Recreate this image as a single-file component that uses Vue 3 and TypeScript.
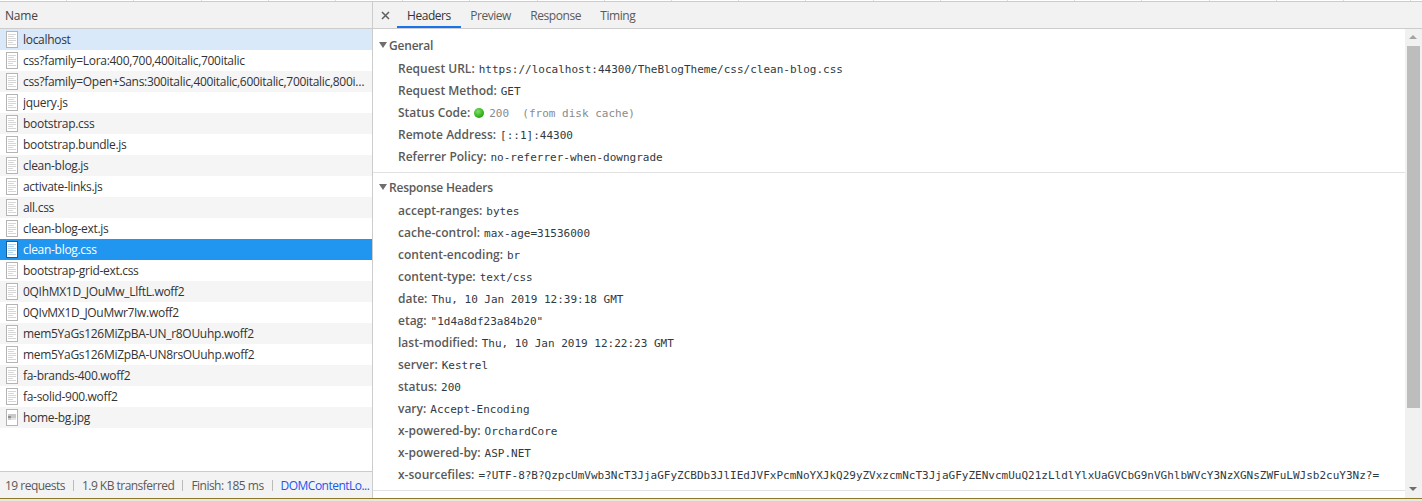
<script setup lang="ts">
interface Req { name: string; kind?: 'img' }
const requests: Req[] = [
  { name: 'localhost' },
  { name: 'css?family=Lora:400,700,400italic,700italic' },
  { name: 'css?family=Open+Sans:300italic,400italic,600italic,700italic,800italic,400,300,600,700,800' },
  { name: 'jquery.js' },
  { name: 'bootstrap.css' },
  { name: 'bootstrap.bundle.js' },
  { name: 'clean-blog.js' },
  { name: 'activate-links.js' },
  { name: 'all.css' },
  { name: 'clean-blog-ext.js' },
  { name: 'clean-blog.css' },
  { name: 'bootstrap-grid-ext.css' },
  { name: '0QIhMX1D_JOuMw_LlftL.woff2' },
  { name: '0QIvMX1D_JOuMwr7Iw.woff2' },
  { name: 'mem5YaGs126MiZpBA-UN_r8OUuhp.woff2' },
  { name: 'mem5YaGs126MiZpBA-UN8rsOUuhp.woff2' },
  { name: 'fa-brands-400.woff2' },
  { name: 'fa-solid-900.woff2' },
  { name: 'home-bg.jpg', kind: 'img' }
]
const selected = 10
const tabs = ['Headers', 'Preview', 'Response', 'Timing']
const general = [
  ['Request URL:', 'https://localhost:44300/TheBlogTheme/css/clean-blog.css'],
  ['Request Method:', 'GET'],
  ['Remote Address:', '[::1]:44300'],
  ['Referrer Policy:', 'no-referrer-when-downgrade']
]
const response = [
  ['accept-ranges:', 'bytes'],
  ['cache-control:', 'max-age=31536000'],
  ['content-encoding:', 'br'],
  ['content-type:', 'text/css'],
  ['date:', 'Thu, 10 Jan 2019 12:39:18 GMT'],
  ['etag:', '"1d4a8df23a84b20"'],
  ['last-modified:', 'Thu, 10 Jan 2019 12:22:23 GMT'],
  ['server:', 'Kestrel'],
  ['status:', '200'],
  ['vary:', 'Accept-Encoding'],
  ['x-powered-by:', 'OrchardCore'],
  ['x-powered-by:', 'ASP.NET'],
  ['x-sourcefiles:', '=?UTF-8?B?QzpcUmVwb3NcT3JjaGFyZCBDb3JlIEdJVFxPcmNoYXJkQ29yZVxzcmNcT3JjaGFyZENvcmUuQ21zLldlYlxUaGVCbG9nVGhlbWVcY3NzXGNsZWFuLWJsb2cuY3Nz?=']
]
</script>

<template>
  <div class="root">
    <div class="ruler"></div>
    <div class="main">
      <aside class="list">
        <div class="list-head">Name</div>
        <ul class="rows">
          <li
            v-for="(r, i) in requests"
            :key="r.name"
            class="row"
            :class="{ sel: i === selected }"
          >
            <svg class="doc" width="12" height="17" viewBox="0 0 12 17">
              <rect x="0.5" y="0.5" width="11" height="16" class="doc-body" />
              <template v-if="r.kind === 'img'">
                <rect x="2" y="5" width="8" height="6" fill="#c9c9c9" />
                <rect x="2" y="7" width="3" height="2" fill="#8f8f8f" />
                <rect x="5" y="9" width="5" height="2" fill="#e4e4e4" />
              </template>
              <template v-else>
                <path class="doc-lines" d="M2 3.5h8M2 5.5h6M2 7.5h8M2 9.5h8M2 11.5h5M2 13.5h8" />
              </template>
            </svg>
            <span class="row-name">{{ r.name }}</span>
          </li>
        </ul>
        <div class="status">
          <span class="st">19 requests</span>
          <span class="st">1.9 KB transferred</span>
          <span class="st">Finish: 185 ms</span>
          <span class="st link">DOMContentLo...</span>
        </div>
      </aside>
      <section class="detail">
        <div class="tabs">
          <svg class="close" width="9" height="9" viewBox="0 0 9 9">
            <path d="M1 1l7 7M8 1l-7 7" stroke="#5f5f5f" stroke-width="1.5" fill="none" />
          </svg>
          <div v-for="(t, i) in tabs" :key="t" class="tab" :class="{ active: i === 0 }">{{ t }}</div>
        </div>
        <div class="body">
          <div class="scroll">
            <div class="sec first-sec">
              <div class="sec-title"><i class="tri"></i>General</div>
              <div class="kv"><b>{{ general[0][0] }}</b><span>{{ general[0][1] }}</span></div>
              <div class="kv"><b>{{ general[1][0] }}</b><span>{{ general[1][1] }}</span></div>
              <div class="kv">
                <b>Status Code:</b>
                <i class="dot"></i>
                <span class="muted">200&nbsp;&nbsp;(from disk cache)</span>
              </div>
              <div class="kv"><b>{{ general[2][0] }}</b><span>{{ general[2][1] }}</span></div>
              <div class="kv"><b>{{ general[3][0] }}</b><span>{{ general[3][1] }}</span></div>
            </div>
            <div class="sec second-sec">
              <div class="sec-title"><i class="tri"></i>Response Headers</div>
              <div v-for="(h, i) in response" :key="i" class="kv"><b>{{ h[0] }}</b><span>{{ h[1] }}</span></div>
            </div>
          </div>
          <div class="sbar">
            <i class="arrow up"></i>
            <div class="thumb"></div>
            <i class="arrow down"></i>
          </div>
        </div>
      </section>
    </div>
    <div class="edge"></div>
  </div>
</template>

<style>
html, body { margin: 0; background: #fff; overflow: hidden; }
</style>

<style scoped>
.root {
  width: 1422px;
  height: 501px;
  display: flex;
  flex-direction: column;
  font-family: "Open Sans", "Noto Sans", sans-serif;
  font-size: 12px;
  color: #333;
  overflow: hidden;
}
.ruler {
  height: 1px;
  flex: none;
  border-bottom: 1px solid #ccc;
  background: repeating-linear-gradient(to right, #fff 0, #fff 66.2px, #ddd 66.2px, #ddd 67.2px);
}
.main { flex: 1; display: flex; min-height: 0; }
.list {
  width: 372px;
  flex: none;
  display: flex;
  flex-direction: column;
  border-right: 1px solid #ccc;
}
.list-head {
  height: 26px;
  flex: none;
  box-sizing: border-box;
  line-height: 28px;
  padding-left: 5px;
  background: #f2f2f2;
  color: #444;
  letter-spacing: -0.2px;
}
.rows {
  list-style: none;
  margin: 0;
  padding: 0;
  flex: 1;
  border-top: 1px solid #ccc;
}
.row {
  height: 21px;
  display: flex;
  align-items: center;
  padding-left: 6px;
  color: #333;
  overflow: hidden;
  letter-spacing: -0.3px;
}
.row:nth-child(even) { background: #fff; }
.row:nth-child(odd) { background: #f5f5f5; }
.row:first-child { background: #d9e9fa; }
.row.sel { background: #2196f0; color: #fff; }
.doc { flex: none; margin-right: 5px; }
.doc-body { fill: #fff; stroke: #b4b4b4; }
.doc-lines { stroke: #d6d6d6; stroke-width: 1; fill: none; }
.sel .doc-body { stroke: #1a5a96; }
.sel .doc-lines { stroke: #b5d5ee; }
.row-name {
  white-space: nowrap;
  overflow: hidden;
  text-overflow: ellipsis;
  flex: 1;
  padding-right: 4px;
}
.status {
  height: 27px;
  flex: none;
  box-sizing: border-box;
  border-top: 1px solid #ccc;
  background: #f3f3f3;
  display: flex;
  align-items: center;
  padding-left: 5px;
  white-space: nowrap;
  overflow: hidden;
  color: #5a5a5a;
  letter-spacing: -0.52px;
}
.st { flex: none; padding-right: 8px; margin-right: 8px; border-right: 1px solid #bbb; line-height: 11px; }
.st.link { margin: 0; padding: 0; border: 0; color: #1a56f0; }
.detail { flex: 1; min-width: 0; display: flex; flex-direction: column; }
.tabs {
  height: 26px;
  flex: none;
  box-sizing: border-box;
  background: #f2f2f2;
  display: flex;
  align-items: stretch;
  padding-left: 8px;
}
.close { align-self: center; margin-right: 7px; }
.tab {
  line-height: 28px;
  padding: 0 9.7px;
  color: #5a5a5a;
  box-sizing: border-box;
  letter-spacing: -0.45px;
}
.tab:first-of-type { padding-left: 10px; }
.tab.active { color: #333; box-shadow: inset 0 -2px 0 #1a73e8; }
.body {
  flex: 1;
  min-height: 0;
  display: flex;
  border-top: 1px solid #ccc;
}
.scroll { flex: 1; min-width: 0; overflow: hidden; }
.sec { border-bottom: 1px solid #e2e2e2; }
.first-sec { padding: 5px 0 4px; }
.second-sec { padding: 3px 0 4px; }
.sec-title {
  height: 22px;
  margin-bottom: 2px;
  display: flex;
  align-items: center;
  padding-left: 6px;
  font-weight: 600;
  color: #5a5a5a;
  letter-spacing: -0.2px;
}
.tri {
  width: 0;
  height: 0;
  border-left: 4px solid transparent;
  border-right: 4px solid transparent;
  border-top: 6px solid #6e6e6e;
  margin-right: 2px;
}
.kv {
  height: 22px;
  line-height: 22px;
  display: flex;
  align-items: baseline;
  padding-left: 25px;
  white-space: nowrap;
}
.kv b { font-weight: 600; color: #5a5a5a; margin-right: 4px; }
.kv span {
  font-family: "DejaVu Sans Mono", "Liberation Mono", monospace;
  font-size: 11px;
  color: #303942;
}
.kv span.muted { color: #8a8a8a; white-space: pre; }
.dot {
  align-self: center;
  width: 10px;
  height: 10px;
  border-radius: 50%;
  background: radial-gradient(circle at 40% 35%, #7fe06a, #27a80f 70%);
  margin: 0 5px 0 0;
}
.sbar {
  width: 17px;
  flex: none;
  background: #f1f1f1;
  position: relative;
  box-sizing: border-box;
  padding: 17px 2px;
  display: flex;
  flex-direction: column;
}
.thumb { height: 362px; background: #bdbdbd; }
.arrow {
  position: absolute;
  left: 4px;
  width: 0;
  height: 0;
  border-left: 4px solid transparent;
  border-right: 4px solid transparent;
}
.arrow.up { top: 6px; border-bottom: 4px solid #a3a3a3; }
.arrow.down { bottom: 7px; border-top: 4px solid #6e6e6e; }
.edge {
  height: 3px;
  flex: none;
  box-sizing: border-box;
  border-top: 1px solid #8a7a2a;
  background: #e8e8e0;
}
</style>
